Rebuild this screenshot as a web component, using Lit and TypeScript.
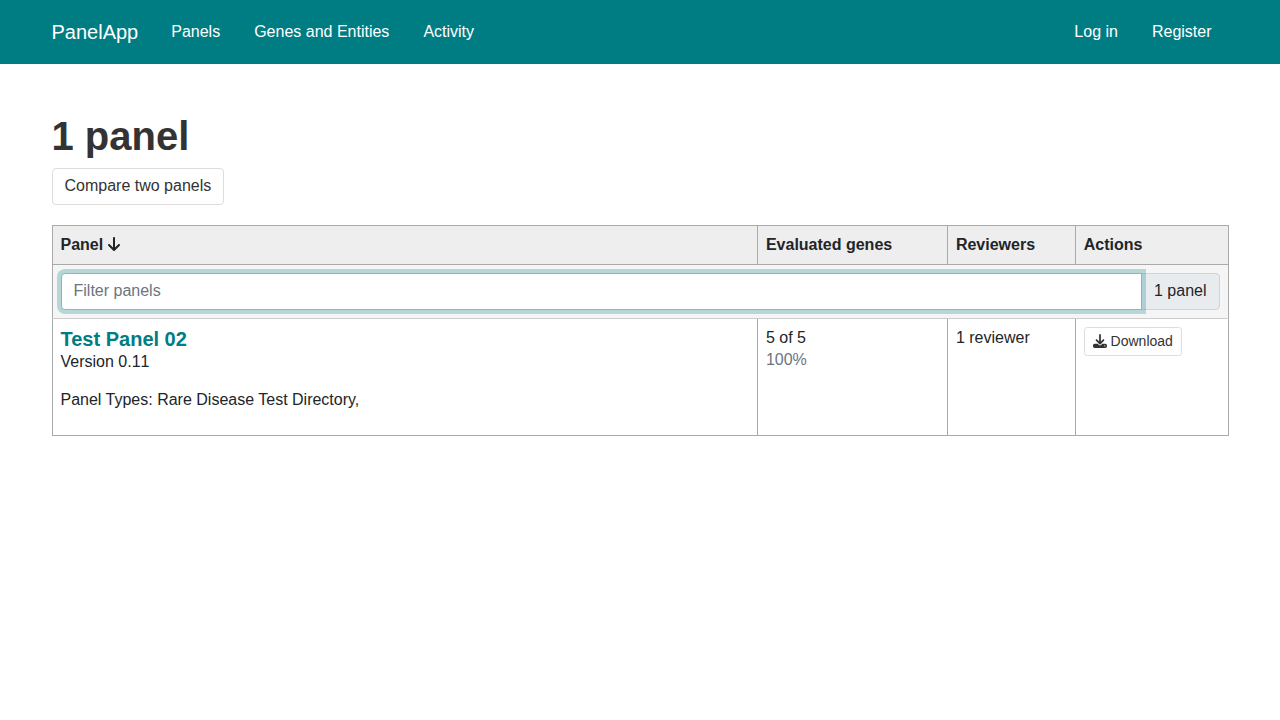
import { LitElement, html, css } from "lit";
import { customElement } from "lit/decorators.js";

@customElement("app-root")
export class AppRoot extends LitElement {
  static styles = css`
    :host {
      display: block;
      min-height: 100vh;
      background: #fff;
      color: #212529;
      font: 16px/1.4 "Liberation Sans", Arial, sans-serif;
    }
    * { box-sizing: border-box; }
    a { color: inherit; text-decoration: none; }
    .navbar {
      display: flex;
      align-items: center;
      height: 64px;
      padding: 0 51.5px;
      background: #007c83;
      color: #fff;
    }
    .brand { font-size: 20px; line-height: 28px; margin-right: 16px; }
    .links { display: flex; flex: 1; }
    .links a { padding: 0 17px; }
    .push { margin-left: auto; }
    main { padding: 48px 51.5px 0; }
    h1 {
      margin: 0 0 8.4px;
      color: #333;
      font-size: 40px;
      line-height: 48px;
      font-weight: 700;
    }
    .btn {
      display: inline-block;
      padding: 6px 12px;
      border: 1px solid #ddd;
      border-radius: 4px;
      background: #fff;
      color: #333;
      font: inherit;
      vertical-align: top;
    }
    .btn.small { padding: 4px 8px; font-size: 14px; border-radius: 3.2px; }
    .toolbar { height: 56.6px; }
    table {
      width: 100%;
      table-layout: fixed;
      border-collapse: collapse;
      border: 1px solid #aaa;
    }
    .c-genes { width: 190px; }
    .c-reviewers { width: 127.8px; }
    .c-actions { width: 152.8px; }
    th, td {
      padding: 8px;
      border: 1px solid #aaa;
      text-align: left;
      vertical-align: top;
    }
    th { background: #eee; }
    .filter { background: #f5f5f5; border-bottom-color: #ccc; }
    .arrow, .download { fill: currentColor; overflow: visible; }
    .arrow { width: 12px; height: 16px; vertical-align: -2px; }
    .download { width: 14px; height: 14px; vertical-align: -1.75px; }
    .group { display: flex; }
    input {
      flex: 1;
      min-width: 0;
      z-index: 1;
      position: relative;
      margin: 0;
      padding: 6px 12px;
      border: 1px solid #7dbdc0;
      border-radius: 4px 0 0 4px;
      outline: 0;
      background: #fff;
      color: #495057;
      font: inherit;
      box-shadow: 0 0 0 4px rgba(0, 124, 131, 0.25);
    }
    input::placeholder { color: #6c757d; opacity: 1; }
    .count {
      margin-left: -1px;
      padding: 6px 12px;
      border: 1px solid #ced4da;
      border-radius: 0 4px 4px 0;
      background: #e9ecef;
    }
    h5 { margin: 0; font-size: 20px; line-height: 24px; color: #007c83; }
    p { margin: 16px 0 15px; }
    .muted { color: #6c757d; }
    .version { font-kerning: none; }
  `;

  render() {
    return html`
      <nav class="navbar">
        <a class="brand" href="#">PanelApp</a>
        <div class="links">
          <a href="#">Panels</a>
          <a href="#">Genes and Entities</a>
          <a href="#">Activity</a>
          <a class="push" href="#">Log in</a>
          <a href="#">Register</a>
        </div>
      </nav>
      <main>
        <h1>1 panel</h1>
        <div class="toolbar"><a class="btn" href="#">Compare two panels</a></div>
        <table>
          <colgroup>
            <col />
            <col class="c-genes" />
            <col class="c-reviewers" />
            <col class="c-actions" />
          </colgroup>
          <thead>
            <tr>
              <th>Panel <svg class="arrow" viewBox="0 0 384 512"><path d="M169.4 470.6c12.5 12.5 32.8 12.5 45.3 0l160-160c12.5-12.5 12.5-32.8 0-45.3s-32.8-12.5-45.3 0L224 370.8V64c0-17.7-14.3-32-32-32s-32 14.3-32 32v306.7L54.6 265.4c-12.5-12.5-32.8-12.5-45.3 0s-12.5 32.8 0 45.3l160 160z"/></svg></th>
              <th>Evaluated genes</th>
              <th>Reviewers</th>
              <th>Actions</th>
            </tr>
            <tr>
              <td class="filter" colspan="4">
                <div class="group">
                  <input type="text" placeholder="Filter panels" />
                  <span class="count">1 panel</span>
                </div>
              </td>
            </tr>
          </thead>
          <tbody>
            <tr>
              <td>
                <h5><a href="#">Test Panel 02</a></h5>
                <div>Version <span class="version">0.11</span></div>
                <p>Panel Types: Rare Disease Test Directory,</p>
              </td>
              <td>5 of 5<br /><span class="muted">100%</span></td>
              <td>1 reviewer</td>
              <td>
                <a class="btn small" href="#"><svg class="download" viewBox="0 0 512 512"><path d="M288 32c0-17.7-14.3-32-32-32s-32 14.3-32 32v242.7l-73.4-73.4c-12.5-12.5-32.8-12.5-45.3 0s-12.5 32.8 0 45.3l128 128c12.5 12.5 32.8 12.5 45.3 0l128-128c12.5-12.5 12.5-32.8 0-45.3s-32.8-12.5-45.3 0L288 274.7V32zM64 352c-35.3 0-64 28.7-64 64v32c0 35.3 28.7 64 64 64h384c35.3 0 64-28.7 64-64v-32c0-35.3-28.7-64-64-64H346.5l-45.3 45.3c-25 25-65.5 25-90.5 0L165.5 352H64zm368 56a24 24 0 1 1 0 48 24 24 0 1 1 0-48z"/></svg> Download</a>
              </td>
            </tr>
          </tbody>
        </table>
      </main>
    `;
  }
}
